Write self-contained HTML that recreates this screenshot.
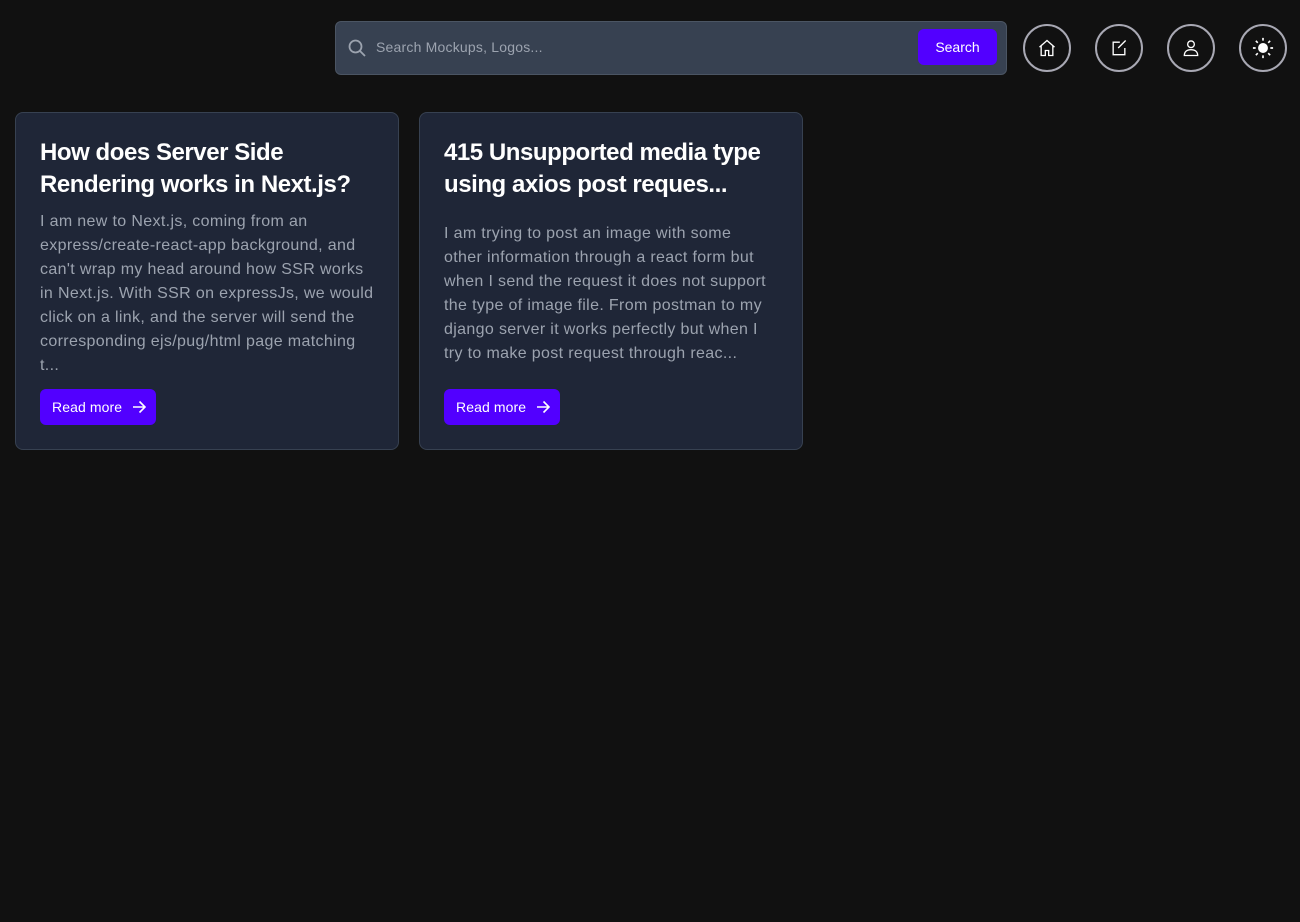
<!DOCTYPE html>
<html><head><style>
body{margin:0;background:#111111;width:1300px;height:922px;font-family:"Liberation Sans",sans-serif;position:relative;overflow:hidden}
.search{position:absolute;left:335px;top:21px;width:670px;height:52px;background:#374151;border:1px solid #4b5563;border-radius:6px}
.search .ph{position:absolute;left:40px;top:17px;font-size:14px;color:#9ca3af;letter-spacing:0.2px}
.search .btn{position:absolute;left:582px;top:7px;width:79px;height:36px;background:#5200ff;border-radius:6px;color:#fff;font-size:14px;font-weight:500;text-align:center;line-height:36px}
.circ{position:absolute;top:24px;width:44px;height:44px;border:2px solid #a8a8b3;border-radius:50%;display:flex;align-items:center;justify-content:center}
.card{position:absolute;top:112px;width:382px;height:336px;background:#1f2637;border:1px solid #374151;border-radius:8px}
.card h2{position:absolute;left:24px;top:24px;margin:0;white-space:nowrap;font-size:24px;line-height:32px;color:#fff;font-weight:bold;letter-spacing:-0.45px}
.card p{position:absolute;left:24px;margin:0;white-space:nowrap;font-size:16px;line-height:24px;color:#9ca3af;letter-spacing:0.35px}
.rm{position:absolute;left:24px;top:276px;width:116px;height:36px;background:#5200ff;border-radius:6px;color:#fff;font-size:14px;line-height:36px;letter-spacing:0.1px}
.rm span{position:absolute;left:12px}
.rm svg{position:absolute;left:92px;top:11px}
</style></head><body>
<div class="search">
<svg style="position:absolute;left:11px;top:16px" width="20" height="20" viewBox="0 0 20 20" fill="none" stroke="#9ca3af" stroke-width="1.8"><circle cx="8.5" cy="8.5" r="6"/><path d="M13 13l5 5"/></svg>
<div class="ph">Search Mockups, Logos...</div>
<div class="btn">Search</div>
</div>
<div class="circ" style="left:1023px"><svg width="20" height="20" viewBox="0 0 24 24" fill="none" stroke="#fff" stroke-width="1.6"><path d="M3 11l9-8 9 8M5 9.5V21h5v-6h4v6h5V9.5"/></svg></div>
<div class="circ" style="left:1095px"><svg width="20" height="20" viewBox="0 0 24 24" fill="none" stroke="#fff" stroke-width="1.6"><path d="M13 5H5v15h14v-8M20 3l-9 9"/></svg></div>
<div class="circ" style="left:1167px"><svg width="20" height="20" viewBox="0 0 24 24" fill="none" stroke="#fff" stroke-width="1.6"><circle cx="12" cy="7.5" r="4"/><path d="M4 21c0-5 3.5-7 8-7s8 2 8 7z"/></svg></div>
<div class="circ" style="left:1239px"><svg width="22" height="22" viewBox="0 0 24 24" fill="none" stroke="#fff" stroke-width="1.8"><circle cx="12" cy="12" r="4.5" fill="#fff"/><path d="M12 1v3M12 20v3M1 12h3M20 12h3M4.2 4.2l2.1 2.1M17.7 17.7l2.1 2.1M4.2 19.8l2.1-2.1M17.7 6.3l2.1-2.1"/></svg></div>

<div class="card" style="left:15px">
<h2>How does Server Side<br>Rendering works in Next.js?</h2>
<p style="top:97px">I am new to Next.js, coming from an<br>express/create-react-app background, and<br>can't wrap my head around how SSR works<br>in Next.js. With SSR on expressJs, we would<br>click on a link, and the server will send the<br>corresponding ejs/pug/html page matching<br>t...</p>
<div class="rm"><span>Read more</span><svg width="14" height="14" viewBox="0 0 14 14" fill="none" stroke="#fff" stroke-width="1.6"><path d="M1 7h12M7.5 1.5L13 7l-5.5 5.5"/></svg></div>
</div>
<div class="card" style="left:419px">
<h2>415 Unsupported media type<br>using axios post reques...</h2>
<p style="top:109px">I am trying to post an image with some<br>other information through a react form but<br>when I send the request it does not support<br>the type of image file. From postman to my<br>django server it works perfectly but when I<br>try to make post request through reac...</p>
<div class="rm"><span>Read more</span><svg width="14" height="14" viewBox="0 0 14 14" fill="none" stroke="#fff" stroke-width="1.6"><path d="M1 7h12M7.5 1.5L13 7l-5.5 5.5"/></svg></div>
</div>
</body></html>
